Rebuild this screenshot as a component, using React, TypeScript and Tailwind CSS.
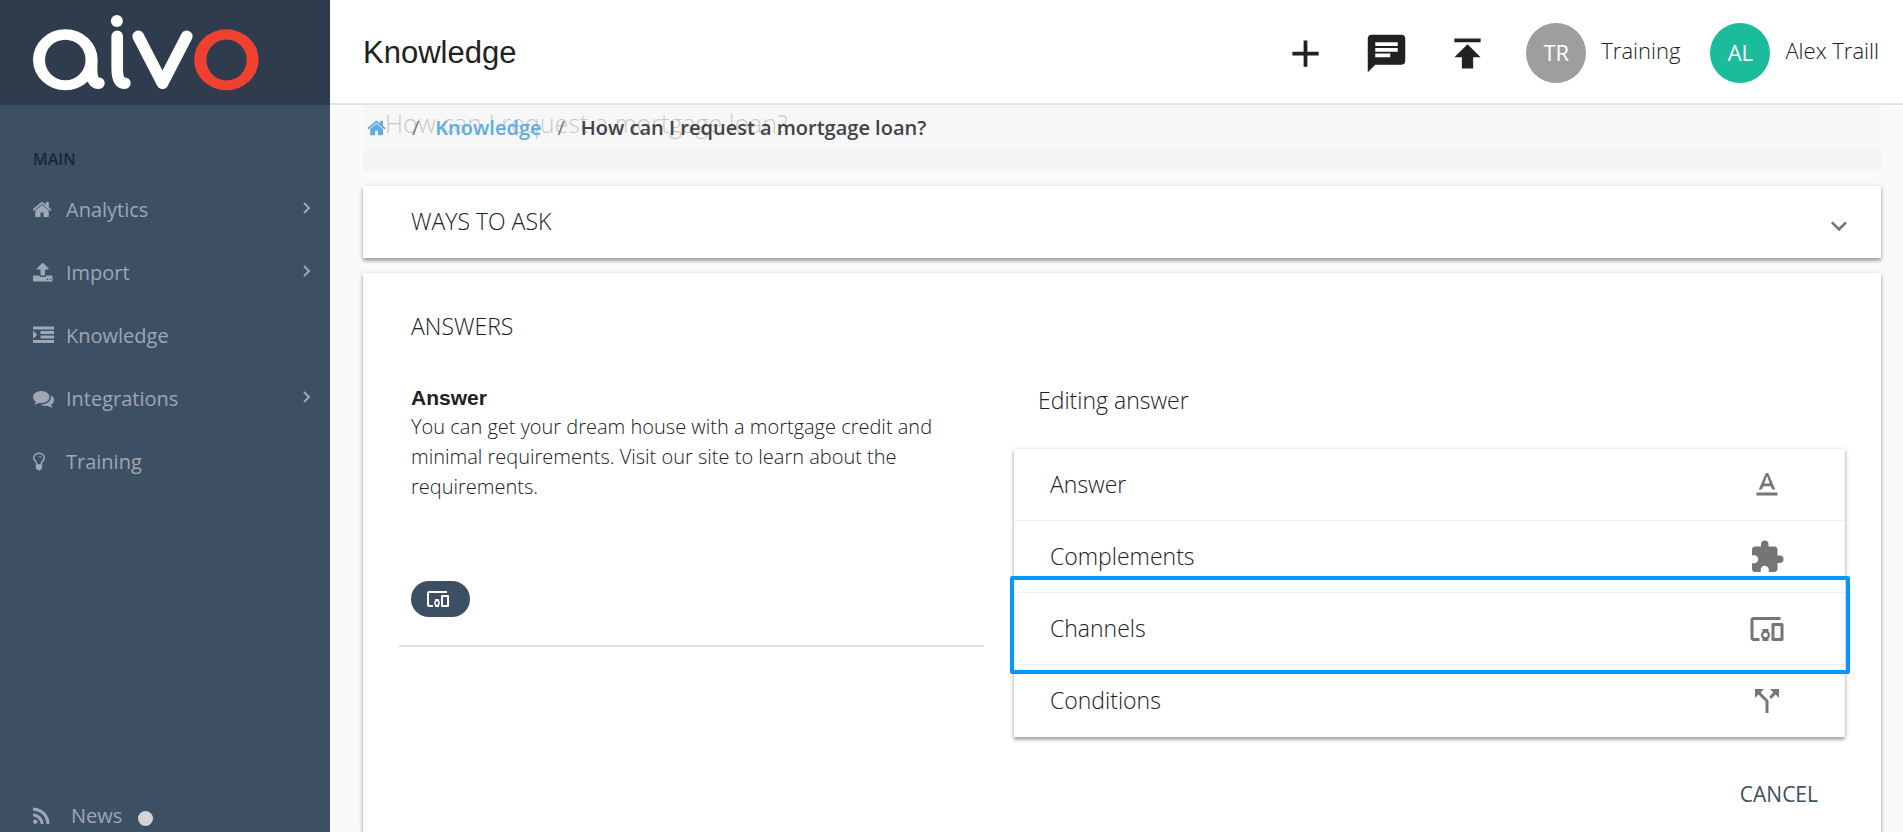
import React from 'react';
import {
  MdAdd,
  MdCallSplit,
  MdChat,
  MdDevicesOther,
  MdExpandMore,
  MdExtension,
  MdPublish,
  MdTextFormat,
} from 'react-icons/md';

type Glyph = { viewBox: string; path: string };

const glyphs: Record<string, Glyph> = {
  home: {
    viewBox: '64 0 1792 1792',
    path: 'M1408 992v480q0 26-19 45t-45 19h-384v-384h-256v384h-384q-26 0-45-19t-19-45v-480q0-1 .5-3t.5-3l575-474 575 474q1 2 1 6zm223-69l-62 74q-8 9-21 11h-3q-13 0-21-7l-692-577-692 577q-12 8-24 7-13-2-21-11l-62-74q-8-10-7-23.5t11-21.5l719-599q32-26 76-26t76 26l244 204v-195q0-14 9-23t23-9h192q14 0 23 9t9 23v408l219 182q10 8 11 21.5t-7 23.5z',
  },
  upload: {
    viewBox: '64 0 1792 1792',
    path: 'M1344 1472q0-26-19-45t-45-19-45 19-19 45 19 45 45 19 45-19 19-45zm256 0q0-26-19-45t-45-19-45 19-19 45 19 45 45 19 45-19 19-45zm128-224v320q0 40-28 68t-68 28h-1472q-40 0-68-28t-28-68v-320q0-40 28-68t68-28h427q21 56 70.5 92t110.5 36h256q61 0 110.5-36t70.5-92h427q40 0 68 28t28 68zm-325-648q-17 40-59 40h-256v448q0 26-19 45t-45 19h-256q-26 0-45-19t-19-45v-448h-256q-42 0-59-40-17-39 14-69l448-448q18-19 45-19t45 19l448 448q31 30 14 69z',
  },
  indent: {
    viewBox: '0 0 1792 1792',
    path: 'M352 832q0 14-9 23l-288 288q-9 9-23 9-13 0-22.5-9.5t-9.5-22.5v-576q0-13 9.5-22.5t22.5-9.5q14 0 23 9l288 288q9 9 9 23zm1440 480v192q0 13-9.5 22.5t-22.5 9.5h-1728q-13 0-22.5-9.5t-9.5-22.5v-192q0-13 9.5-22.5t22.5-9.5h1728q13 0 22.5 9.5t9.5 22.5zm0-384v192q0 13-9.5 22.5t-22.5 9.5h-1088q-13 0-22.5-9.5t-9.5-22.5v-192q0-13 9.5-22.5t22.5-9.5h1088q13 0 22.5 9.5t9.5 22.5zm0-384v192q0 13-9.5 22.5t-22.5 9.5h-1088q-13 0-22.5-9.5t-9.5-22.5v-192q0-13 9.5-22.5t22.5-9.5h1088q13 0 22.5 9.5t9.5 22.5zm0-384v192q0 13-9.5 22.5t-22.5 9.5h-1728q-13 0-22.5-9.5t-9.5-22.5v-192q0-13 9.5-22.5t22.5-9.5h1728q13 0 22.5 9.5t9.5 22.5z',
  },
  comments: {
    viewBox: '0 0 1792 1792',
    path: 'M1408 768q0 139-94 257t-256.5 186.5-353.5 68.5q-86 0-176-16-124 88-278 128-36 9-86 16h-3q-11 0-20.5-8t-11.5-21q-1-3-1-6.5t.5-6.5 2-6l2.5-5 3.5-5.5 4-5 4.5-5 4-4.5q5-6 23-25t26-29.5 22.5-29 25-38.5 20.5-44q-124-72-195-177t-71-224q0-139 94-257t256.5-186.5 353.5-68.5 353.5 68.5 256.5 186.5 94 257zm384 256q0 120-71 224.5t-195 176.5q10 24 20.5 44t25 38.5 22.5 29 26 29.5 23 25q1 1 4 4.5t4.5 5 4 5 3.5 5.5l2.5 5 2 6 .5 6.5-1 6.5q-3 14-13 22t-22 7q-50-7-86-16-154-40-278-128-90 16-176 16-271 0-472-132 58 4 88 4 161 0 309-45t264-129q125-92 192-212t67-254q0-77-23-152 129 71 204 178t75 230z',
  },
  bulb: {
    viewBox: '384 0 1792 1792',
    path: 'M1120 576q0 13-9.5 22.5t-22.5 9.5-22.5-9.5-9.5-22.5q0-46-54-71t-106-25q-13 0-22.5-9.5t-9.5-22.5 9.5-22.5 22.5-9.5q50 0 99.5 16t87 54 37.5 90zm160 0q0-72-34.5-134t-90-101.5-123-62-136.5-22.5-136.5 22.5-123 62-90 101.5-34.5 134q0 101 68 180 10 11 30.5 33t30.5 33q128 153 141 298h228q13-145 141-298 10-11 30.5-33t30.5-33q68-79 68-180zm128 0q0 155-103 268-45 49-74.5 87t-59.5 95.5-34 107.5q47 28 47 82 0 37-25 64 25 27 25 64 0 52-45 81 13 23 13 47 0 46-31.5 71t-77.5 25q-20 44-60 70t-87 26-87-26-60-70q-46 0-77.5-25t-31.5-71q0-24 13-47-45-29-45-81 0-37 25-64-25-27-25-64 0-54 47-82-4-50-34-107.5t-59.5-95.5-74.5-87q-103-113-103-268 0-99 44.5-184.5t117-142 164-89 186.5-32.5 186.5 32.5 164 89 117 142 44.5 184.5z',
  },
  rss: {
    viewBox: '192 0 1792 1792',
    path: 'M576 1344q0 80-56 136t-136 56-136-56-56-136 56-136 136-56 136 56 56 136zm512 123q2 28-17 48-18 21-47 21h-135q-25 0-43-16.5t-20-41.5q-22-229-184.5-391.5t-391.5-184.5q-25-2-41.5-20t-16.5-43v-135q0-29 21-47 17-17 43-17h5q160 13 306 80.5t259 181.5q114 113 181.5 259t80.5 306zm512 2q2 27-18 47-18 20-46 20h-143q-26 0-44.5-17.5t-19.5-42.5q-12-215-101-408.5t-231.5-336-336-231.5-408.5-102q-25-1-42.5-19.5t-17.5-43.5v-143q0-28 20-46 18-18 44-18h3q262 13 501.5 120t425.5 294q187 186 294 425.5t120 501.5z',
  },
};

const Icon: React.FC<{ name: string; className?: string }> = ({ name, className }) => (
  <svg viewBox={glyphs[name].viewBox} className={className} fill="currentColor" aria-hidden="true">
    <path d={glyphs[name].path} />
  </svg>
);

const Logo: React.FC = () => (
  <svg viewBox="99 44 679 227" className="w-[226px]" role="img" aria-label="aivo" fill="none">
    <path
      fill="#fff"
      fillRule="evenodd"
      d="M99 178.500a97 91.500 0 1 0 194 0a97 91.500 0 1 0 -194 0zM135 179a61 61 0 1 0 122 0a61 61 0 1 0 -122 0z"
    />
    <g stroke="#fff" strokeWidth="35" strokeLinecap="round" strokeLinejoin="round">
      <path d="M275 179V208C275 235 282 249 297 249" />
      <path d="M352 108V205C352 235 359 249 375 249" />
      <path d="M415 108L488 249L561 108" />
    </g>
    <circle cx="351" cy="62" r="18" fill="#fff" />
    <path
      fill="#ef4130"
      fillRule="evenodd"
      d="M583 178.500a97 91.500 0 1 0 194 0a97 91.500 0 1 0 -194 0zM620 179a60.500 61.500 0 1 0 121 0a60.500 61.500 0 1 0 -121 0z"
    />
  </svg>
);

const navItems = [
  { label: 'Analytics', icon: 'home', expandable: true },
  { label: 'Import', icon: 'upload', expandable: true },
  { label: 'Knowledge', icon: 'indent', expandable: false },
  { label: 'Integrations', icon: 'comments', expandable: true },
  { label: 'Training', icon: 'bulb', expandable: false },
];

const sections = [
  { label: 'Answer', icon: MdTextFormat },
  { label: 'Complements', icon: MdExtension },
  { label: 'Channels', icon: MdDevicesOther, highlighted: true },
  { label: 'Conditions', icon: MdCallSplit },
];

const actions = [
  { label: 'Add', icon: MdAdd },
  { label: 'Messages', icon: MdChat },
  { label: 'Publish', icon: MdPublish },
];

const Sidebar: React.FC = () => (
  <aside className="flex w-[330px] shrink-0 flex-col bg-[#3d4f62] text-[#9ea7b3]">
    <div className="flex h-[105px] shrink-0 items-start bg-[#2f3c4e] pt-[15px] pl-[33px]">
      <Logo />
    </div>
    <h2 className="mt-[42px] mb-[7px] pl-[33px] text-base leading-6 font-semibold text-[#1c2630]">MAIN</h2>
    <nav>
      <ul>
        {navItems.map((item) => (
          <li key={item.label}>
            <a href="#" className="flex h-[63px] items-center pr-[19px] pl-[33px] text-xl">
              <Icon name={item.icon} className="mr-3 size-[21px]" />
              <span className="flex-1">{item.label}</span>
              {item.expandable && (
                <svg viewBox="0 0 8 12" className="mb-1 h-3 w-2" fill="none" stroke="currentColor" strokeWidth="2">
                  <path d="M1 1l5 5-5 5" />
                </svg>
              )}
            </a>
          </li>
        ))}
      </ul>
    </nav>
    <a href="#" className="mt-auto flex h-8 items-center pl-[33px] text-xl">
      <Icon name="rss" className="mr-[17px] size-[21px]" />
      News
      <span className="mt-1 ml-4 size-[15px] rounded-full bg-[#d4d4d4]" />
    </a>
  </aside>
);

const Header: React.FC = () => (
  <header className="flex h-[105px] shrink-0 items-center border-b-2 border-[#dfe4ec] bg-white pr-6 pl-[33px] text-[#212121]">
    <h1 className="flex-1 pt-1 font-['Liberation_Sans',sans-serif] text-[31px]">Knowledge</h1>
    <div className="flex gap-9 pt-1">
      {actions.map((action) => (
        <button key={action.label} aria-label={action.label}>
          <action.icon className="size-[45px]" />
        </button>
      ))}
    </div>
    <button className="ml-9 flex items-center pt-0.5 text-[22px] font-light">
      <span className="mr-[15px] flex size-[60px] items-center justify-center rounded-full bg-[#9e9e9e] font-normal text-white">
        TR
      </span>
      <span className="pb-1">Training</span>
    </button>
    <button className="ml-[30px] flex items-center pt-0.5 text-[22px] font-light">
      <span className="mr-[15px] flex size-[60px] items-center justify-center rounded-full bg-[#1abc9c] font-normal text-white">
        AL
      </span>
      <span className="pb-1">Alex Traill</span>
    </button>
  </header>
);

const Breadcrumb: React.FC = () => (
  <nav
    aria-label="Breadcrumb"
    className="absolute inset-x-0 top-0 flex h-[45px] items-center bg-[#fafafa]/50 pl-[38px] text-xl font-semibold text-[#3f4347]"
  >
    <a href="#" aria-label="Home" className="text-[#5dade2]">
      <Icon name="home" className="size-5" />
    </a>
    <span className="ml-6 font-normal text-[#777]">/</span>
    <a href="#" className="ml-4 text-[#5dade2]">
      Knowledge
    </a>
    <span className="mx-4 font-normal text-[#777]">/</span>
    <span>How can I request a mortgage loan?</span>
  </nav>
);

const EditingPanel: React.FC = () => (
  <div className="w-7/12 px-[15px]">
    <h3 className="pl-6 text-[23px] leading-8 font-light">Editing answer</h3>
    <ul className="mt-[33px] bg-white shadow-[0_1px_5px_rgba(0,0,0,0.2),0_3px_3px_rgba(0,0,0,0.25)]">
      {sections.map((section) => (
        <li key={section.label} className="relative border-b border-[#f2f2f2] last:border-transparent">
          <button className="flex h-[71px] w-full items-center justify-between pr-[60px] pl-9 text-[23px] font-light">
            {section.label}
            <section.icon className="size-9 text-[#757575]" />
          </button>
          {section.highlighted && (
            <span className="pointer-events-none absolute -top-[17px] -right-[5px] -bottom-[10px] -left-1 z-10 rounded-xs border-4 border-[#0099ff]" />
          )}
        </li>
      ))}
    </ul>
    <div className="mt-9 flex justify-end pr-[27px]">
      <button className="h-11 text-[21px] text-[#3d4f62]">CANCEL</button>
    </div>
  </div>
);

const App: React.FC = () => {
  return (
    <div className="flex h-screen overflow-hidden bg-[#fafafa] font-['Open_Sans',sans-serif] text-[#212121]">
      <Sidebar />
      <div className="flex min-w-0 flex-1 flex-col">
        <Header />
        <main className="relative flex flex-1 flex-col pr-[22px] pl-[33px]">
          <div className="h-[66px] shrink-0 bg-[#f4f4f4] pl-[22px] text-[25px] leading-9 font-light text-[#999]">
            How can I request a mortgage loan?
          </div>
          <Breadcrumb />

          <button className="mt-[15px] flex h-[72px] shrink-0 items-center justify-between bg-white pr-[26px] pl-12 text-[23px] font-light shadow-[0_1px_5px_rgba(0,0,0,0.2),0_3px_3px_rgba(0,0,0,0.25)]">
            <span className="pb-0.5">WAYS TO ASK</span>
            <MdExpandMore className="mt-2 size-8 text-[#757575]" />
          </button>

          <section className="mt-[15px] flex-1 bg-white px-[21px] pt-[35px] shadow-[0_1px_5px_rgba(0,0,0,0.2),0_3px_3px_rgba(0,0,0,0.25)]">
            <h2 className="pl-[27px] text-[23px] leading-9 font-light">ANSWERS</h2>
            <div className="mt-10 flex">
              <div className="w-5/12 px-[15px]">
                <article className="border-b-2 border-[#e0e0e0] pr-6 pb-7 pl-3">
                  <h3 className="font-['Liberation_Sans',sans-serif] text-[21px] leading-7 font-bold">Answer</h3>
                  <p className="text-xl leading-[30px] font-light">
                    You can get your dream house with a mortgage credit and minimal requirements. Visit our site to
                    learn about the requirements.
                  </p>
                  <span className="mt-[79px] flex h-9 w-[59px] items-center rounded-full bg-[#3d4f62] pl-[15px] text-white">
                    <MdDevicesOther className="size-6" />
                  </span>
                </article>
              </div>
              <EditingPanel />
            </div>
          </section>
        </main>
      </div>
    </div>
  );
};

export default App;
